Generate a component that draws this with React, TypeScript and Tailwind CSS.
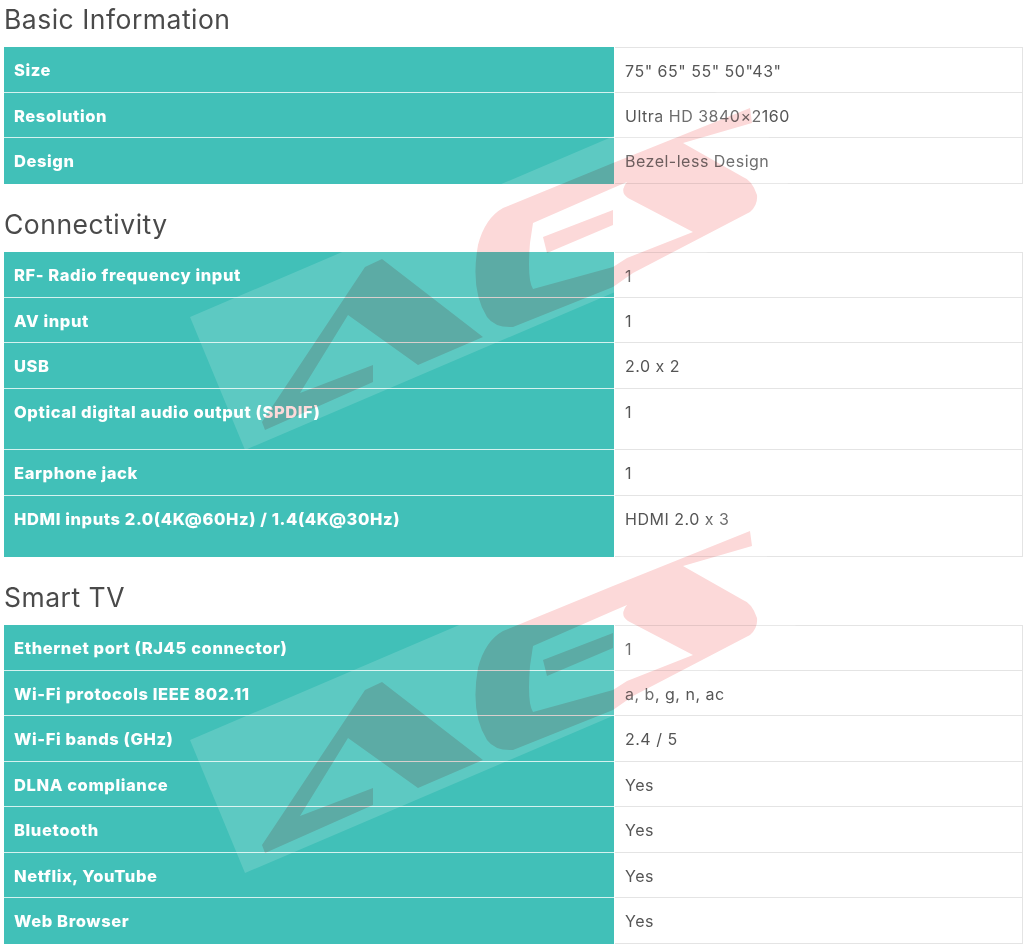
const sections = [
  {
    title: "Basic Information",
    rows: [
      { label: "Size", value: '75" 65" 55" 50"43"' },
      { label: "Resolution", value: "Ultra HD 3840×2160" },
      { label: "Design", value: "Bezel-less Design" },
    ],
  },
  {
    title: "Connectivity",
    rows: [
      { label: "RF- Radio frequency input", value: "1" },
      { label: "AV input", value: "1" },
      { label: "USB", value: "2.0 x 2" },
      { label: "Optical digital audio output (SPDIF)", value: "1", tall: true },
      { label: "Earphone jack", value: "1" },
      { label: "HDMI inputs 2.0(4K@60Hz) / 1.4(4K@30Hz)", value: "HDMI 2.0 x 3", tall: true },
    ],
  },
  {
    title: "Smart TV",
    rows: [
      { label: "Ethernet port (RJ45 connector)", value: "1" },
      { label: "Wi-Fi protocols IEEE 802.11", value: "a, b, g, n, ac" },
      { label: "Wi-Fi bands (GHz)", value: "2.4 / 5" },
      { label: "DLNA compliance", value: "Yes" },
      { label: "Bluetooth", value: "Yes" },
      { label: "Netflix, YouTube", value: "Yes" },
      { label: "Web Browser", value: "Yes" },
    ],
  },
];

// the faint logo stamped twice over the tables, multiply gives pink on white and dark on teal
function Watermark() {
  return (
    <>
      <svg className="pointer-events-none absolute left-0 top-0" width="1024" height="945" viewBox="0 0 1024 945">
        {[0, 423].map((y) => (
          <polygon
            key={y}
            transform={`translate(0 ${y})`}
            points="190,317 745,80 800,213 245,450"
            fill="#ffffff"
            fillOpacity="0.15"
          />
        ))}
      </svg>
      <svg
        className="pointer-events-none absolute left-0 top-0 mix-blend-multiply"
        width="1024"
        height="945"
        viewBox="0 0 1024 945"
      >
        {[0, 423].map((y) => (
          <g key={y} transform={`translate(0 ${y})`} fill="#fcd9d9" fillRule="evenodd">
            <path d="M365 267 L382 259 L483 337 L418 365 L348 315 L300 393 L373 365 L373 382 L265 430 L262 422 Z" />
            <path d="M750 108 L613 163 L503 208 Q485 218 478 245 Q470 290 487 317 Q495 328 513 327 L613 287 L633 273 L750 212 Q758 205 757 195 Q752 180 743 177 L683 143 L752 123 Z M533 223 L613 188 L627 182 Q619 192 628 198 L693 232 L627 258 L613 267 L533 289 Q527 280 530 243 Z" />
            <path d="M543 237 L613 210 L613 225 L547 253 Z" />
          </g>
        ))}
      </svg>
    </>
  );
}

export default function App() {
  return (
    <div className="relative h-[945px] w-[1024px] overflow-hidden bg-white font-['Inter',sans-serif]">
      {sections.map((section, i) => (
        <section key={section.title} className="pl-1 pr-px">
          <h2
            className={`flex items-end pb-[13px] text-[26.5px] leading-[30px] tracking-[0.5px] text-[#4a4a4a] ${
              i === 0 ? "h-[47px]" : i === 1 ? "h-[68.5px]" : "h-[68px]"
            }`}
          >
            {section.title}
          </h2>
          <div>
            {section.rows.map((row, j) => (
              <div
                key={row.label}
                className={`grid grid-cols-[610px_1fr] ${row.tall ? "h-[61.5px]" : "h-[45.5px]"}`}
              >
                <div
                  className={`border-b bg-[#41c0b8] pl-2.5 pt-[13px] text-[16.5px] leading-[20px] font-extrabold tracking-[0.6px] text-white ${
                    j === section.rows.length - 1 ? "border-transparent" : "border-[#d5f2ef]"
                  }`}
                >
                  {row.label}
                </div>
                <div
                  className={`ml-px border-b border-r border-[#e4e4e4] pl-2.5 pt-[13px] text-[16px] leading-[20px] tracking-[0.5px] text-[#555555] ${
                    j === 0 ? "border-t" : ""
                  }`}
                >
                  {row.value}
                </div>
              </div>
            ))}
          </div>
        </section>
      ))}
      <Watermark />
    </div>
  );
}
